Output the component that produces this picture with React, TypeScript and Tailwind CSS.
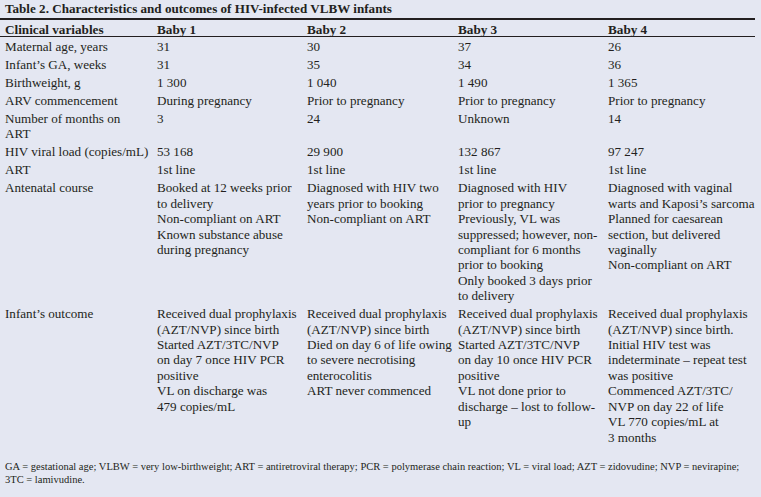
import React from "react";

type Row = {
    label: string[];
    cells: string[][];
};

const rows: Row[] = [
    { label: ["Maternal age, years"], cells: [["31"], ["30"], ["37"], ["26"]] },
    { label: ["Infant\u2019s GA, weeks"], cells: [["31"], ["35"], ["34"], ["36"]] },
    { label: ["Birthweight, g"], cells: [["1 300"], ["1 040"], ["1 490"], ["1 365"]] },
    {
        label: ["ARV commencement"],
        cells: [["During pregnancy"], ["Prior to pregnancy"], ["Prior to pregnancy"], ["Prior to pregnancy"]],
    },
    { label: ["Number of months on", "ART"], cells: [["3"], ["24"], ["Unknown"], ["14"]] },
    {
        label: ["HIV viral load (copies/mL)"],
        cells: [["53 168"], ["29 900"], ["132 867"], ["97 247"]],
    },
    { label: ["ART"], cells: [["1st line"], ["1st line"], ["1st line"], ["1st line"]] },
    {
        label: ["Antenatal course"],
        cells: [
            [
                "Booked at 12 weeks prior",
                "to delivery",
                "Non-compliant on ART",
                "Known substance abuse",
                "during pregnancy",
            ],
            ["Diagnosed with HIV two", "years prior to booking", "Non-compliant on ART"],
            [
                "Diagnosed with HIV",
                "prior to pregnancy",
                "Previously, VL was",
                "suppressed; however, non-",
                "compliant for 6 months",
                "prior to booking",
                "Only booked 3 days prior",
                "to delivery",
            ],
            [
                "Diagnosed with vaginal",
                "warts and Kaposi\u2019s sarcoma",
                "Planned for caesarean",
                "section, but delivered",
                "vaginally",
                "Non-compliant on ART",
            ],
        ],
    },
    {
        label: ["Infant\u2019s outcome"],
        cells: [
            [
                "Received dual prophylaxis",
                "(AZT/NVP) since birth",
                "Started AZT/3TC/NVP",
                "on day 7 once HIV PCR",
                "positive",
                "VL on discharge was",
                "479 copies/mL",
            ],
            [
                "Received dual prophylaxis",
                "(AZT/NVP) since birth",
                "Died on day 6 of life owing",
                "to severe necrotising",
                "enterocolitis",
                "ART never commenced",
            ],
            [
                "Received dual prophylaxis",
                "(AZT/NVP) since birth",
                "Started AZT/3TC/NVP",
                "on day 10 once HIV PCR",
                "positive",
                "VL not done prior to",
                "discharge \u2013 lost to follow-",
                "up",
            ],
            [
                "Received dual prophylaxis",
                "(AZT/NVP) since birth.",
                "Initial HIV test was",
                "indeterminate \u2013 repeat test",
                "was positive",
                "Commenced AZT/3TC/",
                "NVP on day 22 of life",
                "VL 770 copies/mL at",
                "3 months",
            ],
        ],
    },
];

const grid = "grid grid-cols-[152px_150px_151px_150px_152px]";

function Lines({ lines }: { lines: string[] }) {
    return (
        <div className="pl-[5px] whitespace-nowrap">
            {lines.map((l, i) => (
                <div key={i}>{l}</div>
            ))}
        </div>
    );
}

export default function App() {
    return (
        <div
            className="w-[761px] h-[497px] bg-[#e4e7f2] text-[#231f20] overflow-hidden"
            style={{ fontFamily: '"Liberation Serif", "Times New Roman", serif' }}
        >
            <div className="w-[755px]">
                <div className="h-[18px] pl-[5px] pt-[1px] text-[13.1px] font-bold leading-[16px] whitespace-nowrap">
                    Table 2. Characteristics and outcomes of HIV-infected VLBW infants
                </div>
                <div className={`${grid} border-t-2 border-b border-[#231f20] h-[19px] text-[13.2px] font-bold leading-[16px] pt-[2px]`}>
                    <Lines lines={["Clinical variables"]} />
                    <Lines lines={["Baby 1"]} />
                    <Lines lines={["Baby 2"]} />
                    <Lines lines={["Baby 3"]} />
                    <Lines lines={["Baby 4"]} />
                </div>
                <div className="pt-[1px] text-[13.1px] leading-[15.4px]">
                    {rows.map((row, i) => (
                        <div key={i} className={`${grid} pt-[1px] pb-[1.6px]`}>
                            <Lines lines={row.label} />
                            {row.cells.map((c, j) => (
                                <Lines key={j} lines={c} />
                            ))}
                        </div>
                    ))}
                </div>
                <div className="pl-[5px] pt-[13px] text-[10.5px] leading-[13px]">
                    <div className="whitespace-nowrap">
                        GA = gestational age; VLBW = very low-birthweight; ART = antiretroviral therapy; PCR = polymerase
                        chain reaction; VL = viral load; AZT = zidovudine; NVP = nevirapine;
                    </div>
                    <div>3TC = lamivudine.</div>
                </div>
            </div>
        </div>
    );
}
